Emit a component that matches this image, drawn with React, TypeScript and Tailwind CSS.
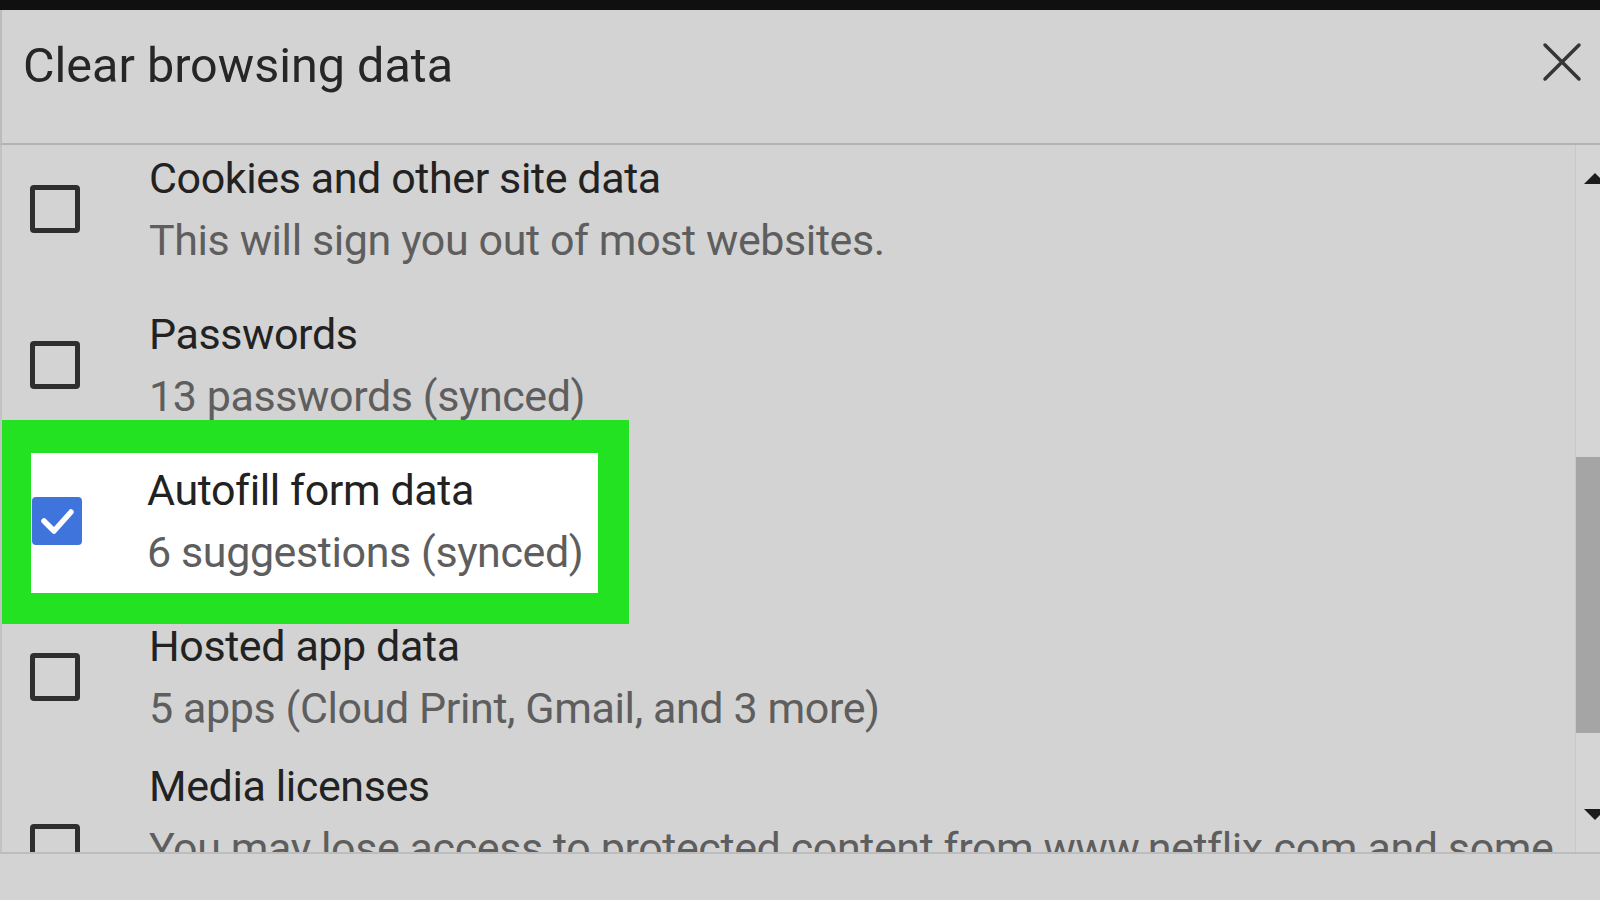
import React from "react"

const font = { fontFamily: "Roboto, 'Noto Sans', Arial, sans-serif" }

function Box({ checked }: { checked?: boolean }) {
  if (checked) {
    return (
      <div className="w-[50px] h-[48px] rounded-[4px] bg-[#3f74dc] flex items-center justify-center">
        <svg width="40" height="34" viewBox="0 0 40 34">
          <path d="M7 17 L17 27 L34 8" fill="none" stroke="#ffffff" strokeWidth="5.5" strokeLinecap="round" strokeLinejoin="round" />
        </svg>
      </div>
    )
  }
  return <div className="w-[50px] h-[48px] rounded-[4px] border-[5px] border-[#2e2e2e]" />
}

function Row({ title, lines, checked, className }: { title: string; lines: string[]; checked?: boolean; className?: string }) {
  return (
    <div className={"flex items-center " + (className ?? "")}>
      <div className="w-[147px] shrink-0 pl-[28px]">
        <Box checked={checked} />
      </div>
      <div className="tracking-[-0.025em]">
        <div className="text-[43px] leading-[62px] text-[#222222] whitespace-nowrap">{title}</div>
        {lines.map((l) => (
          <div key={l} className="text-[43px] leading-[62px] text-[#5e5e5e] whitespace-nowrap">{l}</div>
        ))}
      </div>
    </div>
  )
}

export default function App() {
  return (
    <div className="w-full h-[900px] overflow-hidden flex flex-col bg-[#d3d3d3]" style={font}>
      <div className="h-[10px] bg-[#101010] shrink-0" />
      <div className="h-[135px] shrink-0 flex justify-between items-start pt-[28px] pl-[21px] pr-[18px] border-b-2 border-[#b3b3b3] border-l-2 border-l-[#bcbcbc]">
        <h1 className="text-[48.5px] leading-[56px] text-[#262626]">Clear browsing data</h1>
        <svg width="40" height="40" viewBox="0 0 40 40" className="mt-[4px]">
          <path d="M3 3 L37 37 M37 3 L3 37" stroke="#353535" strokeWidth="3.5" strokeLinecap="round" />
        </svg>
      </div>
      <div className="flex-1 flex overflow-hidden border-l-2 border-[#c2c2c2]">
        <div className="flex-1 overflow-hidden pt-[2px]">
          <Row title="Cookies and other site data" lines={["This will sign you out of most websites."]} />
          <Row className="mt-[32px]" title="Passwords" lines={["13 passwords (synced)"]} />
          <div className="mt-[-7px] w-[627px] border-[#22e222] border-l-[29px] border-r-[31px] border-t-[33px] border-b-[31px] bg-white pt-[6px] pb-[10px]">
            <div className="flex items-center">
              <div className="w-[116px] shrink-0 pl-[1px]">
                <Box checked />
              </div>
              <div className="tracking-[-0.025em]">
                <div className="text-[43px] leading-[62px] text-[#222222] whitespace-nowrap">Autofill form data</div>
                <div className="text-[43px] leading-[62px] text-[#5e5e5e] whitespace-nowrap">6 suggestions (synced)</div>
              </div>
            </div>
          </div>
          <Row className="mt-[-9px]" title="Hosted app data" lines={["5 apps (Cloud Print, Gmail, and 3 more)"]} />
          <Row
            className="mt-[16px]"
            title="Media licenses"
            lines={["You may lose access to protected content from www.netflix.com and some", "more sites."]}
          />
        </div>
        <div className="w-[25px] shrink-0 flex flex-col border-l border-[#c8c8c8] bg-[#d5d5d5]">
          <svg width="25" height="14" viewBox="0 0 25 14" className="mt-[26px]">
            <polygon points="8,13 19,2 30,13" fill="#1c1c1c" />
          </svg>
          <div className="mt-[272px] h-[276px] bg-[#a5a5a5]" />
          <svg width="25" height="14" viewBox="0 0 25 14" className="mt-[74px]">
            <polygon points="8,2 19,13 30,2" fill="#1c1c1c" />
          </svg>
        </div>
      </div>
      <div className="h-[48px] shrink-0 border-t-2 border-[#bdbdbd] bg-[#d3d3d3]" />
    </div>
  )
}
